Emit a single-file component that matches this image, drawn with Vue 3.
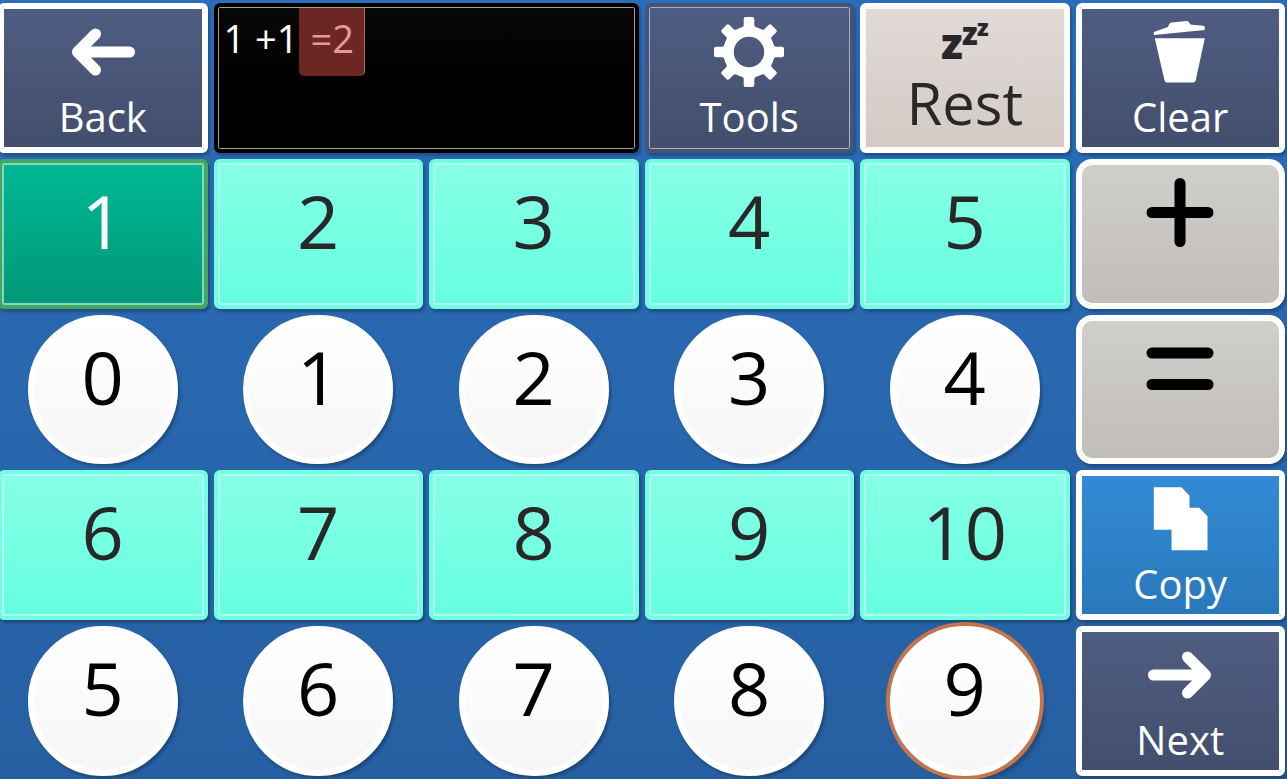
<template>
  <main class="board">
    <template v-for="cell in cells" :key="cell.id">
      <output v-if="cell.kind === 'display'" class="cell display">
        <span class="typed">1 +1</span>
        <span class="result">=2</span>
      </output>
      <button
        v-else
        type="button"
        class="cell"
        :class="[cell.kind, { focused: cell.focused }]"
        :aria-label="cell.icon && !cell.label ? cell.icon : null"
      >
        <svg v-if="cell.icon === 'rest'" class="icon short" viewBox="0 0 72 48" aria-hidden="true">
          <text x="12" y="42" font-size="43">z</text>
          <text x="33" y="28" font-size="31">z</text>
          <text x="48" y="19" font-size="23">z</text>
        </svg>
        <svg v-else-if="cell.icon" class="icon" viewBox="0 0 72 72" aria-hidden="true">
          <g v-if="cell.icon === 'back'" class="stroke">
            <path d="M62.5 35H14M28.5 17L10.5 35L28.5 53" />
          </g>
          <g v-else-if="cell.icon === 'next'" class="stroke">
            <path d="M9.5 35H58M43.5 17L61.5 35L43.5 53" />
          </g>
          <g v-else-if="cell.icon === 'plus'" class="stroke">
            <path d="M8 39.5H64M36 10.5V68.5" />
          </g>
          <g v-else-if="cell.icon === 'equals'" class="stroke">
            <path d="M8 24H64M8 55.5H64" />
          </g>
          <g v-else-if="cell.icon === 'tools'">
            <circle cx="36" cy="35" r="20.5" fill="none" stroke="currentColor" stroke-width="10.5" />
            <path
              v-for="n in 8"
              :key="n"
              d="M32.5 0H39.5Q41.3 0 41.3 2V8Q41.5 10.5 46 12L43 17H29L26 12Q30.5 10.5 30.7 8V2Q30.7 0 32.5 0Z"
              :transform="`rotate(${n * 45} 36 35)`"
            />
          </g>
          <path
            v-else-if="cell.icon === 'clear'"
            d="M9.8 18V15L23.8 10L25.2 7.2Q25.7 5.8 27.5 5.6L42.5 4Q44.2 4 45 5.2L46.4 7.6L59.5 8.8Q60.8 9 60.8 10.5V13ZM10.8 21.3H60.8L51.8 63Q51.3 65.5 49 65.5H23Q21 65.5 20.4 63Z"
          />
          <path
            v-else-if="cell.icon === 'copy'"
            d="M9.8 3.3H37.5L45.5 11.7V23.7H55.2L63.5 32.3V66.3H27.5V45.7H9.8Z"
          />
        </svg>
        <span v-if="cell.label" class="label">{{ cell.label }}</span>
      </button>
    </template>
  </main>
</template>

<script setup>
const row = (kind, labels) => labels.map((label) => ({ kind, label: String(label) }));

const focusedLast = row('circle', [5, 6, 7, 8, 9]);
focusedLast[4].focused = true;

const cells = [
  { kind: 'nav', icon: 'back', label: 'Back' },
  { kind: 'display' },
  { kind: 'nav thin', icon: 'tools', label: 'Tools' },
  { kind: 'rest', icon: 'rest', label: 'Rest' },
  { kind: 'nav', icon: 'clear', label: 'Clear' },
  { kind: 'number selected', label: '1' },
  ...row('number', [2, 3, 4, 5]),
  { kind: 'operator', icon: 'plus' },
  ...row('circle', [0, 1, 2, 3, 4]),
  { kind: 'operator', icon: 'equals' },
  ...row('number', [6, 7, 8, 9, 10]),
  { kind: 'nav copy', icon: 'copy', label: 'Copy' },
  ...focusedLast,
  { kind: 'nav', icon: 'next', label: 'Next' },
].map((cell, id) => ({ id, ...cell }));
</script>

<style>
body {
  margin: 0;
  background: #2761a5;
  overflow-x: hidden;
}
</style>

<style scoped>
.board {
  box-sizing: border-box;
  min-height: 100vh;
  margin-left: -2px;
  display: grid;
  grid-template-columns: repeat(6, minmax(0, 1fr));
  grid-auto-rows: 1fr;
  gap: 6px;
  padding: 3px 2px 3px 0;
  background: linear-gradient(#2b6dba, #2660a2);
  font-family: 'Open Sans', 'Noto Sans', sans-serif;
  font-weight: 370;
  overflow: hidden;
}

.cell {
  --frame: #fff;
  --ring: #fff;
  box-sizing: border-box;
  min-width: 0;
  margin: 0;
  display: flex;
  flex-direction: column;
  align-items: center;
  justify-content: flex-start;
  gap: 8px;
  padding: 10px 0 0;
  border: 4px solid var(--frame);
  border-radius: 6px;
  box-shadow: inset 0 0 0 2px var(--ring), 2px 3px 3px rgba(0, 0, 0, 0.25);
  font: inherit;
  font-size: 40px;
  line-height: 40px;
  color: #fff;
}

.nav {
  background: linear-gradient(#4f5d82, #424e6c);
}

.thin {
  --frame: #46547a;
  --ring: #a9b0c4;
  box-shadow: inset 0 0 0 1px var(--ring), 2px 3px 3px rgba(0, 0, 0, 0.25);
}

.copy {
  background: linear-gradient(#328bd5, #2978bb);
}

.rest {
  --ring: #fbf9f8;
  background: linear-gradient(#e2dad7, #d3cac5);
  color: #282828;
  font-size: 58px;
  line-height: 60px;
}

.number {
  --frame: #72ffe1;
  --ring: #b0fff0;
  padding-top: 18px;
  background: linear-gradient(#86ffe6, #66ffe0);
  color: #282828;
  font-size: 74px;
  line-height: 80px;
}

.selected {
  --frame: #41a85f;
  --ring: #8bd3bf;
  background: linear-gradient(#00b894, #009878);
  color: #fff;
}

.operator {
  border-radius: 16px;
  background: linear-gradient(#d0cfcb, #c1bdb9);
  color: #000;
}

.circle {
  height: 100%;
  aspect-ratio: 1;
  justify-self: center;
  padding-top: 18px;
  border-radius: 50%;
  background: linear-gradient(#fff, #f6f6f6);
  color: #000;
  font-size: 74px;
  line-height: 80px;
}

.focused {
  box-shadow: inset 0 0 0 2px #fff, 0 0 0 4px #c87449, 5px 6px 4px rgba(0, 0, 0, 0.25);
}

.display {
  --frame: #000;
  --ring: #a0a0a0;
  grid-column: span 2;
  flex-direction: row;
  align-items: flex-start;
  gap: 0;
  padding: 1px 6px;
  background: linear-gradient(#080808, #000 50%);
  box-shadow: inset 0 0 0 1px var(--ring), 2px 3px 3px rgba(0, 0, 0, 0.25);
  font-size: 38px;
  line-height: 60px;
}

.result {
  padding: 0 10px 8px 12px;
  border-right: 1px solid #a06b69;
  border-radius: 0 0 5px 5px;
  background: #6c2725;
  color: #e69a98;
}

.icon {
  flex: none;
  width: 72px;
  height: 72px;
  overflow: visible;
  fill: currentColor;
}

.short {
  height: 48px;
}

.icon text {
  font-weight: 800;
}

.stroke {
  fill: none;
  stroke: currentColor;
  stroke-width: 11;
  stroke-linecap: round;
  stroke-linejoin: round;
}
</style>
